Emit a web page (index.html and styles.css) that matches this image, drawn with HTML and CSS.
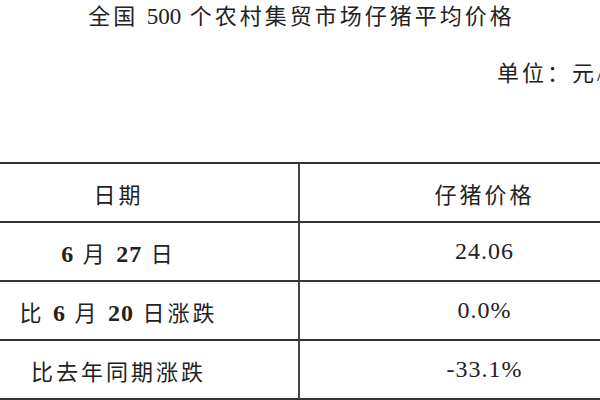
FILE: index.html
```html
<!DOCTYPE html>
<html lang="zh-CN">
<head>
<meta charset="utf-8">
<title>全国500个农村集贸市场仔猪平均价格</title>
<link rel="stylesheet" href="styles.css">
</head>
<body>
<div class="page">
  <h1 class="title">全国 <span class="num-t">500</span> 个农村集贸市场仔猪平均价格</h1>
  <p class="unit">单位：元/公斤</p>
  <div class="table">
    <div class="cell left"><span>日期</span></div>
    <div class="cell right"><span>仔猪价格</span></div>
    <div class="cell left"><span><span class="num-b">6</span> 月 <span class="num-b">27</span> 日</span></div>
    <div class="cell right"><span class="num">24.06</span></div>
    <div class="cell left"><span>比 <span class="num-b">6</span> 月 <span class="num-b">20</span> 日涨跌</span></div>
    <div class="cell right"><span class="num">0.0%</span></div>
    <div class="cell left"><span>比去年同期涨跌</span></div>
    <div class="cell right"><span class="num">-33.1%</span></div>
  </div>
</div>
</body>
</html>
```
FILE: styles.css
```css
html, body {
  margin: 0;
  padding: 0;
  background: #fff;
}
body {
  width: 600px;
  height: 400px;
  overflow: hidden;
}
.page {
  font-family: "Liberation Serif", "Noto Sans CJK SC", serif;
  font-size: 22px;
  color: #222;
  letter-spacing: 3px;
}
.title {
  margin: 0;
  font-size: 22px;
  font-weight: normal;
  line-height: 34px;
  text-align: center;
  white-space: nowrap;
  padding-left: 3px;
}
.num-t {
  font-size: 23px;
  letter-spacing: 0;
}
.unit {
  margin: 25px 0 0 0;
  line-height: 30px;
  padding-left: 497px;
  white-space: nowrap;
  overflow: hidden;
}
.table {
  margin-top: 73px;
  margin-left: -64px;
  width: 730px;
  display: grid;
  grid-template-columns: 364px 366px;
  border-top: 2px solid #333;
}
.cell {
  height: 57px;
  border-bottom: 2px solid #333;
  display: flex;
  align-items: center;
  justify-content: center;
  white-space: nowrap;
}
.left {
  border-right: 2px solid #444;
  padding-left: 3px;
}
.right {
  padding-left: 3px;
}
.num {
  font-size: 24px;
  letter-spacing: 1px;
}
.num-b {
  font-size: 24px;
  font-weight: bold;
  letter-spacing: 1px;
}
```
